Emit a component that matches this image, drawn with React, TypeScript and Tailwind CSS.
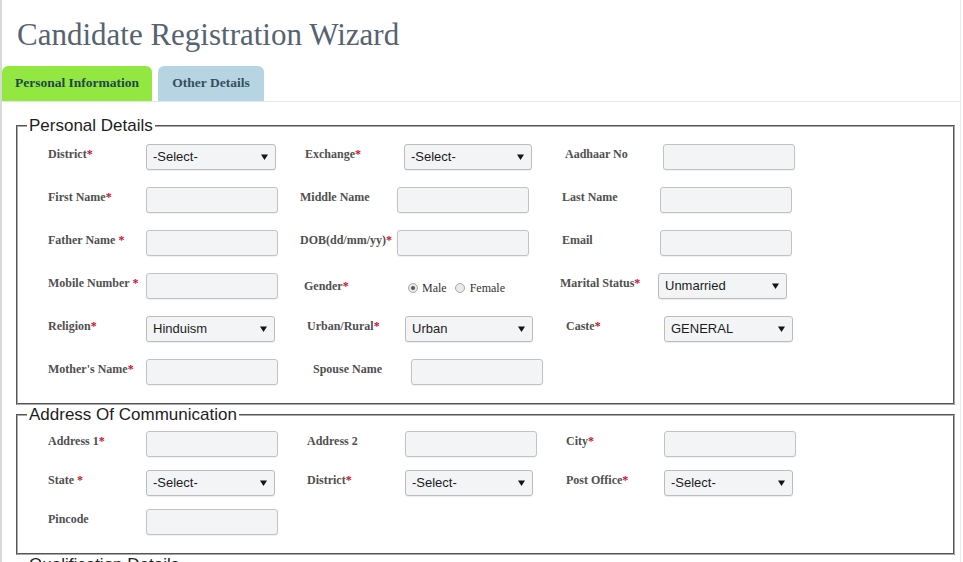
type Field = {
  label: string
  star?: string
  lc?: string
  kind: "input" | "select" | "radio"
  value?: string
  cc?: string
}

const serif = "font-['Liberation_Serif','Times_New_Roman',serif]"
const sans = "font-['Liberation_Sans',Arial,sans-serif]"

// personal details rows
const personalRows: Field[][] = [
  [
    { label: "District", star: "*", kind: "select", value: "-Select-", cc: "w-[130px]" },
    { label: "Exchange", star: "*", lc: "ml-[7px]", kind: "select", value: "-Select-", cc: "ml-[6px] w-[128px]" },
    { label: "Aadhaar No", lc: "ml-[7px]", kind: "input", cc: "ml-[5px] w-[132px]" },
  ],
  [
    { label: "First Name", star: "*", kind: "input", cc: "w-[132px]" },
    { label: "Middle Name", lc: "ml-[2px]", kind: "input", cc: "-ml-px w-[132px]" },
    { label: "Last Name", lc: "ml-[4px]", kind: "input", cc: "ml-[2px] w-[132px]" },
  ],
  [
    { label: "Father Name", star: " *", kind: "input", cc: "w-[132px]" },
    { label: "DOB(dd/mm/yy)", star: "*", lc: "ml-[2px]", kind: "input", cc: "-ml-px w-[132px]" },
    { label: "Email", lc: "ml-[4px]", kind: "input", cc: "ml-[2px] w-[132px]" },
  ],
  [
    { label: "Mobile Number", star: " *", kind: "input", cc: "w-[132px]" },
    { label: "Gender", star: "*", lc: "ml-[6px] pt-[6px]", kind: "radio", cc: "ml-[10px] pt-[4px]" },
    { label: "Marital Status", star: "*", lc: "ml-[2px]", kind: "select", value: "Unmarried", cc: "w-[129px]" },
  ],
  [
    { label: "Religion", star: "*", kind: "select", value: "Hinduism", cc: "w-[129px]" },
    { label: "Urban/Rural", star: "*", lc: "ml-[9px]", kind: "select", value: "Urban", cc: "ml-[7px] w-[128px]" },
    { label: "Caste", star: "*", lc: "ml-[8px]", kind: "select", value: "GENERAL", cc: "ml-[6px] w-[129px]" },
  ],
  [
    { label: "Mother's Name", star: "*", kind: "input", cc: "w-[132px]" },
    { label: "Spouse Name", lc: "ml-[15px]", kind: "input", cc: "ml-[13px] w-[132px]" },
  ],
]

const addressRows: Field[][] = [
  [
    { label: "Address 1", star: "*", kind: "input", cc: "w-[132px]" },
    { label: "Address 2", lc: "ml-[9px]", kind: "input", cc: "ml-[7px] w-[132px]" },
    { label: "City", star: "*", lc: "ml-[8px]", kind: "input", cc: "ml-[6px] w-[132px]" },
  ],
  [
    { label: "State", star: " *", kind: "select", value: "-Select-", cc: "w-[129px]" },
    { label: "District", star: "*", lc: "ml-[9px]", kind: "select", value: "-Select-", cc: "ml-[7px] w-[128px]" },
    { label: "Post Office", star: "*", lc: "ml-[8px]", kind: "select", value: "-Select-", cc: "ml-[6px] w-[129px]" },
  ],
  [{ label: "Pincode", kind: "input", cc: "w-[132px]" }],
]

const Radio = ({ checked }: { checked?: boolean }) => (
  <span className="flex h-[10px] w-[10px] items-center justify-center rounded-full border border-[#a8a8a8] bg-[#e9e9e9]">
    {checked && <span className="h-[4px] w-[4px] rounded-full bg-[#555]" />}
  </span>
)

const Control = ({ f }: { f: Field }) => {
  if (f.kind === "radio") {
    return (
      <div className={`flex items-center ${serif} text-[12px] text-[#333] ${f.cc ?? ""}`}>
        <Radio checked />
        <span className="ml-[4px]">Male</span>
        <span className="ml-[8px]">
          <Radio />
        </span>
        <span className="ml-[5px]">Female</span>
      </div>
    )
  }
  if (f.kind === "select") {
    return (
      <div
        className={`flex h-[26px] items-center justify-between rounded-[3px] border border-[#bcbcbc] bg-[#f3f4f6] pl-[6px] pr-[7px] ${sans} text-[13px] text-[#1c1c1c] shadow-[0_1px_1px_rgba(0,0,0,0.07)] ${f.cc ?? ""}`}
      >
        <span>{f.value}</span>
        <svg width="7" height="6" viewBox="0 0 7 6">
          <path d="M0 0.5h7L3.5 6z" fill="#141414" />
        </svg>
      </div>
    )
  }
  return (
    <div
      className={`h-[26px] rounded-[3px] border border-[#c2c2c2] bg-[#f3f4f6] shadow-[0_1px_1px_rgba(0,0,0,0.06)] ${f.cc ?? ""}`}
    />
  )
}

const Label = ({ f }: { f: Field }) => (
  <div className={`pb-[5px] ${serif} text-[12px] font-bold whitespace-nowrap text-[#505050] ${f.lc ?? ""}`}>
    {f.label}
    {f.star && <span className="text-[#c8102e]">{f.star}</span>}
  </div>
)

const FormRow = ({ fields, height }: { fields: Field[]; height: string }) => (
  <div className={`grid ${height} grid-cols-[98px_152px_100px_160px_100px_1fr] items-center pl-[30px]`}>
    {fields.map((f) => (
      <>
        <Label key={f.label + "-l"} f={f} />
        <Control key={f.label + "-c"} f={f} />
      </>
    ))}
  </div>
)

const Section = ({ title, className, children }: { title: string; className?: string; children?: React.ReactNode }) => (
  <fieldset
    className={`mx-0 ml-[14px] mr-[5px] min-w-0 border-2 border-[#a9a9a9] [border-style:groove] p-0 ${className ?? ""}`}
  >
    <legend className={`ml-[9px] px-[2px] ${sans} text-[17px] leading-[18px] text-[#1d1d1d]`}>{title}</legend>
    {children}
  </fieldset>
)

export default function App() {
  return (
    <div className="min-h-screen border-l-2 border-[#d9d9d9] bg-white">
      <div className="mr-[2px] min-h-screen border-r border-[#ebebeb]">
        {/* Header */}
        <div className="h-[66px] pl-[15px] pt-[18px]">
          <h1 className={`${serif} text-[31px] leading-[34px] text-[#56636f]`}>Candidate Registration Wizard</h1>
        </div>

        {/* Tabs */}
        <div className="flex h-[36px] items-end gap-[6px] border-b border-[#e6e6e6]">
          <div
            className={`flex h-[35px] w-[150px] items-center justify-center rounded-t-[6px] bg-[#92e840] ${serif} text-[13.5px] font-bold text-[#22464a]`}
          >
            Personal Information
          </div>
          <div
            className={`flex h-[35px] w-[106px] items-center justify-center rounded-t-[6px] bg-[#b7d4e3] ${serif} text-[13.5px] font-bold text-[#34505e]`}
          >
            Other Details
          </div>
        </div>

        <div className="pt-[15px]">
          <Section title="Personal Details" className="pb-[10px]">
            {personalRows.map((row, i) => (
              <FormRow key={i} fields={row} height="h-[43px]" />
            ))}
          </Section>

          <Section title="Address Of Communication" className="mt-px pb-[12px]">
            {addressRows.map((row, i) => (
              <FormRow key={i} fields={row} height="h-[39px]" />
            ))}
          </Section>

          <Section title="Qualification Details" className="mt-px h-[80px]" />
        </div>
      </div>
    </div>
  )
}
